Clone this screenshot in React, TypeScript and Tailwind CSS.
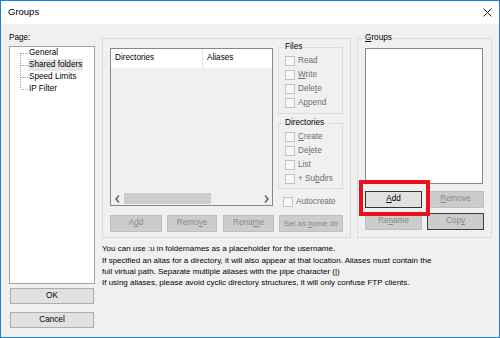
import React from 'react'

type BtnProps = { children: React.ReactNode; className: string; disabled?: boolean; focused?: boolean }

function Btn({ children, className, disabled, focused }: BtnProps) {
  const look = disabled
    ? focused
      ? 'bg-[#cccccc] border-[#3c3c3c] text-[#8a8a8a]'
      : 'bg-[#cccccc] border-[#bfbfbf] text-[#8a8a8a]'
    : focused
      ? 'bg-[#e1e1e1] border-[#333333] text-black'
      : 'bg-[#e1e1e1] border-[#adadad] text-black'
  return (
    <div className={`flex items-center justify-center border leading-none whitespace-pre ${look} ${className}`}>
      {children}
    </div>
  )
}

function Check({ children, indent = 'pl-[6px]' }: { children: React.ReactNode; indent?: string }) {
  return (
    <div className={`flex items-center h-[14px] ${indent}`}>
      <span className="w-[10px] h-[10px] border border-[#c4c4c4] bg-[#f7f7f7]" />
      <span className="ml-[3px] text-[#6d6d6d] leading-none">{children}</span>
    </div>
  )
}

// dotted tree connector: first / middle / last row
function TreeLine({ pos }: { pos: 'first' | 'mid' | 'last' }) {
  const y1 = pos === 'first' ? 6 : 0
  const y2 = pos === 'last' ? 6 : 12
  return (
    <svg width="18" height="12" className="shrink-0">
      <line x1="10.5" y1={y1} x2="10.5" y2={y2} stroke="#a0a0a0" strokeDasharray="1 1" />
      <line x1="11" y1="6.5" x2="18" y2="6.5" stroke="#a0a0a0" strokeDasharray="1 1" />
    </svg>
  )
}

function Chevron({ dir }: { dir: 'l' | 'r' }) {
  return (
    <svg width="5" height="8" viewBox="0 0 5 8">
      <polyline
        points={dir === 'l' ? '4,0.5 1,4 4,7.5' : '1,0.5 4,4 1,7.5'}
        fill="none"
        stroke="#606060"
        strokeWidth="1.4"
      />
    </svg>
  )
}

const tree: { label: string; pos: 'first' | 'mid' | 'last'; sel?: boolean }[] = [
  { label: 'General', pos: 'first' },
  { label: 'Shared folders', pos: 'mid', sel: true },
  { label: 'Speed Limits', pos: 'mid' },
  { label: 'IP Filter', pos: 'last' },
]

export default function App() {
  return (
    <div className="relative w-[500px] h-[338px] border border-[#1c7fd6] bg-[#f0f0f0] flex flex-col text-[8.2px] text-black font-['Liberation_Sans',Arial,sans-serif]">
      {/* title bar */}
      <div className="h-[23px] bg-white flex items-center justify-between pl-[7px] pr-[7px]">
        <span className="text-[9.5px]">Groups</span>
        <svg width="9" height="9" viewBox="0 0 9 9">
          <path d="M0.5 0.5 L8.5 8.5 M8.5 0.5 L0.5 8.5" stroke="#222" strokeWidth="1" />
        </svg>
      </div>

      <div className="flex flex-1">
        {/* left column */}
        <div className="ml-[8px] w-[86px] flex flex-col pt-[9px] pb-[9px]">
          <div className="h-[10px] leading-[10px]">Page:</div>
          <div className="mt-[3px] h-[238px] border border-[#a0a0a0] bg-white">
            {tree.map(t => (
              <div key={t.label} className="flex items-center h-[12px]">
                <TreeLine pos={t.pos} />
                <span className={`px-[1px] leading-[12px] ${t.sel ? 'bg-[#e6e6e6]' : ''}`}>{t.label}</span>
              </div>
            ))}
          </div>
          <Btn className="mt-[4px] mx-[1px] h-[16px]">OK</Btn>
          <Btn className="mt-[8px] mx-[1px] h-[16px]">Cancel</Btn>
        </div>

        {/* right part */}
        <div className="ml-[7px] flex flex-col pt-[9px]">
          <div className="flex items-start">
            {/* shared folders group */}
            <div className="mt-[5px] w-[249px] h-[200px] border border-[#dcdcdc] flex flex-col">
              <div className="flex items-start pt-[3px] pl-[7px]">
                {/* list view */}
                <div className="mt-[6px] w-[163px] h-[158px] border border-[#828790] flex flex-col">
                  <div className="h-[19px] bg-white flex">
                    <div className="w-[92px] border-r border-[#e5e5e5] pl-[4px] flex items-center">Directories</div>
                    <div className="pl-[4px] flex items-center">Aliases</div>
                  </div>
                  <div className="flex-1 bg-[#f0f0f0]" />
                  <div className="h-[13px] flex items-center bg-[#f0f0f0]">
                    <div className="w-[12px] flex justify-center"><Chevron dir="l" /></div>
                    <div className="ml-[1px] w-[87px] h-[11px] bg-[#cdcdcd]" />
                    <div className="flex-1" />
                    <div className="w-[12px] flex justify-center"><Chevron dir="r" /></div>
                  </div>
                </div>

                {/* permissions */}
                <div className="ml-[5px] w-[65px] flex flex-col">
                  <fieldset className="border border-[#dcdcdc] pb-[3px]">
                    <legend className="ml-[5px] px-[1px] leading-[10px]">Files</legend>
                    <div className="pt-[2px]">
                      <Check>Read</Check>
                      <Check><u>W</u>rite</Check>
                      <Check>Dele<u>t</u>e</Check>
                      <Check>A<u>p</u>pend</Check>
                    </div>
                  </fieldset>
                  <fieldset className="mt-[4px] border border-[#dcdcdc] pb-[2px]">
                    <legend className="ml-[5px] px-[1px] leading-[10px]">Directories</legend>
                    <div className="pt-[2px]">
                      <Check><u>C</u>reate</Check>
                      <Check>De<u>l</u>ete</Check>
                      <Check>List</Check>
                      <Check>+ Su<u>b</u>dirs</Check>
                    </div>
                  </fieldset>
                  <div className="mt-[6px]">
                    <Check indent="pl-[5px]">Autocreate</Check>
                  </div>
                </div>
              </div>

              <div className="mt-auto pb-[5px] pl-[7px] flex">
                <Btn disabled className="w-[52px] h-[17px]">A<u>d</u>d</Btn>
                <Btn disabled className="ml-[5px] w-[50px] h-[17px]">Remo<u>v</u>e</Btn>
                <Btn disabled className="ml-[6px] w-[51px] h-[17px]">Rena<u>m</u>e</Btn>
                <Btn disabled className="ml-[5px] w-[64px] h-[17px] text-[7.8px]">Set as <u>h</u>ome dir</Btn>
              </div>
            </div>

            {/* groups */}
            <fieldset className="ml-[6px] w-[135px] border border-[#dcdcdc] pb-[7px]">
              <legend className="ml-[6px] px-[1px] leading-[10px]"><u>G</u>roups</legend>
              <div className="mt-[5px] ml-[7px] w-[118px] h-[136px] border border-[#828790] bg-white" />
              <div className="mt-[7px] ml-[7px] flex gap-[5px]">
                <Btn focused className="w-[57px] h-[17px]"><u>A</u>dd</Btn>
                <Btn disabled className="w-[57px] h-[17px]"><u>R</u>emove</Btn>
              </div>
              <div className="mt-[5px] ml-[7px] flex gap-[5px]">
                <Btn disabled className="w-[57px] h-[17px]">Re<u>n</u>ame</Btn>
                <Btn disabled focused className="w-[57px] h-[17px]">Cop<u>y</u></Btn>
              </div>
            </fieldset>
          </div>

          {/* help text */}
          <div className="mt-[5px] whitespace-nowrap text-[8px]">
            <div className="leading-[12px]">You can use :u in foldernames as a placeholder for the username.</div>
            <div className="leading-[11px]">
              If specified an alias for a directory, it will also appear at that location. Aliases must contain the
              <br />
              full virtual path. Separate multiple aliases with the pipe character (|)
            </div>
            <div className="leading-[11px]">If using aliases, please avoid cyclic directory structures, it will only confuse FTP clients.</div>
          </div>
        </div>
      </div>

      {/* highlight around the Add button */}
      <div className="absolute left-[358px] top-[179px] w-[71px] h-[36px] border-[4px] border-[#e8111f]" />
    </div>
  )
}
